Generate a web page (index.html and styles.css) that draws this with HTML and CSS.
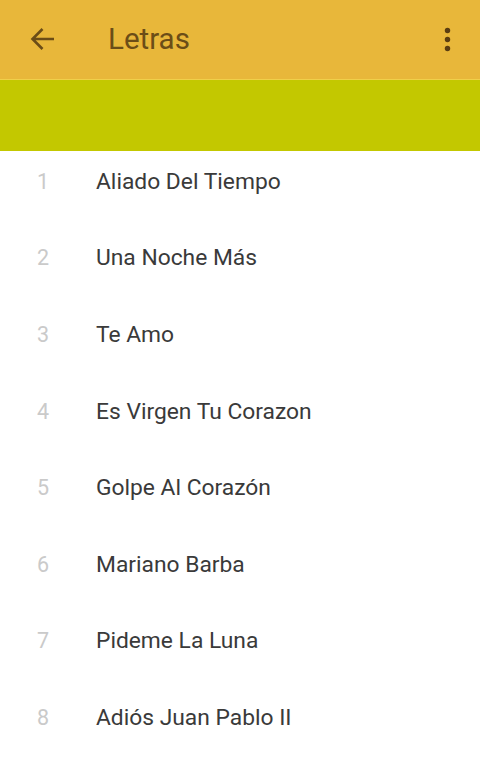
FILE: index.html
```html
<!DOCTYPE html>
<html>
<head>
<meta charset="utf-8">
<link rel="stylesheet" href="styles.css">
</head>
<body>
<header class="appbar">
  <svg class="back" viewBox="0 0 26 26"><path d="M25 13H3.5M13.5 3L3.5 13l10 10" fill="none" stroke="#6b4d17" stroke-width="2.6"/></svg>
  <h1 class="title">Letras</h1>
  <svg class="more" viewBox="0 0 24 24"><circle cx="12" cy="5" r="2.1" fill="#5a3d12"/><circle cx="12" cy="12" r="2.1" fill="#5a3d12"/><circle cx="12" cy="19" r="2.1" fill="#5a3d12"/></svg>
</header>
<div class="band"></div>
<ul class="list">
  <li class="row"><span class="num">1</span><span class="name">Aliado Del Tiempo</span></li>
  <li class="row"><span class="num">2</span><span class="name">Una Noche Más</span></li>
  <li class="row"><span class="num">3</span><span class="name">Te Amo</span></li>
  <li class="row"><span class="num">4</span><span class="name">Es Virgen Tu Corazon</span></li>
  <li class="row"><span class="num">5</span><span class="name">Golpe Al Corazón</span></li>
  <li class="row"><span class="num">6</span><span class="name">Mariano Barba</span></li>
  <li class="row"><span class="num">7</span><span class="name">Pideme La Luna</span></li>
  <li class="row"><span class="num">8</span><span class="name">Adiós Juan Pablo II</span></li>
</ul>
</body>
</html>
```
FILE: styles.css
```css
html, body { margin: 0; padding: 0; background: #fff; }
body { font-family: Roboto, "Noto Sans", sans-serif; width: 480px; height: 758px; overflow: hidden; }
.appbar {
  height: 80px;
  background: #e8b73a;
  display: flex;
  align-items: center;
  box-sizing: border-box;
  padding: 0 17px 0 29px;
  border-bottom: 1px solid #f0d04a;
}
.back { width: 26px; height: 26px; flex: none; margin-top: -1px; }
.title {
  margin: -2px 0 0 53px;
  font-size: 29.5px;
  font-weight: 400;
  color: #6b4d17;
  flex: 1;
}
.more { width: 31px; height: 31px; flex: none; margin-top: -1px; }
.band { height: 71px; background: #c3c800; }
.list { list-style: none; margin: 0; padding: 0; }
.row {
  height: 76.6px;
  display: flex;
  align-items: center;
  box-sizing: border-box;
  padding-bottom: 16px;
}
.num {
  width: 96px;
  box-sizing: border-box;
  padding-left: 37px;
  font-size: 21.5px;
  color: #cacaca;
}
.name {
  font-size: 22.8px;
  color: #3a3a3a;
}
```
